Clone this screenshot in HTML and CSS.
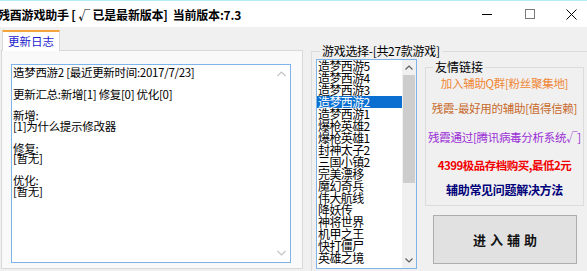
FILE: index.html
```html
<!DOCTYPE html>
<html lang="zh-CN">
<head>
<meta charset="utf-8">
<title>残酉游戏助手</title>
<link rel="stylesheet" href="styles.css">
</head>
<body>
<div class="window">
  <div class="titlebar">
    <div class="title">残酉游戏助手 [ √ 已是最新版本]  当前版本:7.3</div>
    <div class="controls">
      <div class="ctl"><svg width="10" height="10" viewBox="0 0 10 10"><path d="M0 5.5H10" stroke="#000" stroke-width="1"/></svg></div>
      <div class="ctl"><svg width="10" height="10" viewBox="0 0 10 10"><rect x="0.5" y="0.5" width="9" height="9" fill="none" stroke="#7a7a7a" stroke-width="1"/></svg></div>
      <div class="ctl close"><svg width="11" height="11" viewBox="0 0 11 11"><path d="M0.5 0.5L10.5 10.5M10.5 0.5L0.5 10.5" stroke="#000" stroke-width="1"/></svg></div>
    </div>
  </div>
  <div class="main">
    <div class="left">
      <div class="tabstrip"><div class="tab">更新日志</div></div>
      <div class="panel">
        <div class="textbox">
          <div class="text">造梦西游2 [最近更新时间:2017/7/23]

更新汇总:新增[1] 修复[0] 优化[0]

新增:
[1]为什么提示修改器

修复:
[暂无]

优化:
[暂无]</div>
          <div class="vscroll">
            <svg width="9" height="6" viewBox="0 0 9 6"><path d="M0.5 5L4.5 1L8.5 5" fill="none" stroke="#c4c4c4" stroke-width="1.2"/></svg>
            <svg width="9" height="6" viewBox="0 0 9 6"><path d="M0.5 1L4.5 5L8.5 1" fill="none" stroke="#c4c4c4" stroke-width="1.2"/></svg>
          </div>
        </div>
      </div>
    </div>
    <div class="right">
      <fieldset class="games">
        <legend>游戏选择-[共27款游戏]</legend>
        <div class="games-body">
          <div class="listbox">
            <div class="items">
              <div class="item">造梦西游5</div>
              <div class="item">造梦西游4</div>
              <div class="item">造梦西游3</div>
              <div class="item selected">造梦西游2</div>
              <div class="item">造梦西游1</div>
              <div class="item">爆枪英雄2</div>
              <div class="item">爆枪英雄1</div>
              <div class="item">封神太子2</div>
              <div class="item">三国小镇2</div>
              <div class="item">完美漂移</div>
              <div class="item">魔幻奇兵</div>
              <div class="item">伟大航线</div>
              <div class="item">降妖传</div>
              <div class="item">神将世界</div>
              <div class="item">机甲之王</div>
              <div class="item">快打僵尸</div>
              <div class="item">英雄之境</div>
            </div>
            <div class="lscroll">
              <div class="arrow"><svg width="8" height="5" viewBox="0 0 8 5"><path d="M0.5 4.5L4 1L7.5 4.5" fill="none" stroke="#606060" stroke-width="1.2"/></svg></div>
              <div class="track"><div class="thumb"></div></div>
              <div class="arrow"><svg width="8" height="5" viewBox="0 0 8 5"><path d="M0.5 0.5L4 4L7.5 0.5" fill="none" stroke="#606060" stroke-width="1.2"/></svg></div>
            </div>
          </div>
          <div class="side">
            <fieldset class="links">
              <legend>友情链接</legend>
              <div class="link l1">加入辅助Q群[粉丝聚集地]</div>
              <div class="link l2">残霞-最好用的辅助[值得信赖]</div>
              <div class="link l3">残霞通过[腾讯病毒分析系统√]</div>
              <div class="link l4">4399极品存档购买,最低2元</div>
              <div class="link l5">辅助常见问题解决方法</div>
            </fieldset>
            <button class="enter">进入辅助</button>
          </div>
        </div>
      </fieldset>
    </div>
  </div>
</div>
</body>
</html>
```
FILE: styles.css
```css
html, body {
  margin: 0;
  padding: 0;
}
body {
  width: 587px;
  height: 271px;
  overflow: hidden;
  background: #f0f0f0;
  font-family: "Noto Sans CJK SC", "Microsoft YaHei", sans-serif;
  color: #000;
}
.window {
  width: 587px;
  height: 271px;
  overflow: hidden;
}
.titlebar {
  height: 26px;
  border-top: 1px solid #b3ecf8;
  background: #fff;
  display: flex;
  align-items: center;
}
.title {
  font-size: 12px;
  font-weight: bold;
  white-space: pre;
  margin-left: -2px;
  letter-spacing: -0.2px;
}
.controls {
  margin-left: auto;
  margin-right: -5px;
  display: flex;
  height: 26px;
}
.ctl {
  width: 43px;
  display: flex;
  align-items: center;
  justify-content: center;
}
.ctl.close {
  width: 41px;
}
.main {
  display: flex;
  height: 244px;
}
.left {
  width: 304px;
  flex: none;
}
.tabstrip {
  height: 23px;
  padding-left: 2px;
  display: flex;
  align-items: flex-end;
}
.tab {
  width: 56px;
  height: 19px;
  border-top: 2px solid #f3a53c;
  border-left: 1px solid #d9d9d9;
  border-right: 1px solid #d9d9d9;
  background: #fff;
  color: #1c1ccf;
  font-size: 11.5px;
  line-height: 19px;
  text-align: center;
  margin-bottom: -1px;
  position: relative;
  z-index: 1;
}
.panel {
  margin-left: 1px;
  width: 302px;
  height: 219px;
  box-sizing: border-box;
  border: 1px solid #d9d9d9;
  background: #f9f9f9;
  padding: 13px 0 0 9px;
}
.textbox {
  width: 280px;
  height: 199px;
  box-sizing: border-box;
  border: 1px solid #7eb4ea;
  background: #fff;
  display: flex;
}
.text {
  flex: 1;
  padding: 2px 0 0 1px;
  font-size: 11.5px;
  line-height: 10.8px;
  white-space: pre;
  letter-spacing: -0.3px;
}
.vscroll {
  width: 17px;
  display: flex;
  flex-direction: column;
  justify-content: space-between;
  align-items: center;
  padding: 6px 0 6px;
}
.right {
  flex: 1;
  padding-left: 7px;
}
.games {
  margin: 17px 0 0 0;
  padding: 0 0 0 4px;
  border: 1px solid #dcdcdc;
  border-right: none;
  border-bottom: none;
  height: 260px;
  box-sizing: border-box;
  min-width: 0;
}
.games > legend {
  margin-left: 4px;
  padding: 0 2px;
  font-size: 12px;
  line-height: 14px;
  letter-spacing: -0.3px;
}
.games-body {
  display: flex;
  align-items: flex-start;
}
.listbox {
  margin-top: 1px;
  width: 101px;
  height: 210px;
  box-sizing: border-box;
  border: 1px solid #7eb4ea;
  background: #fff;
  display: flex;
}
.items {
  flex: 1;
  padding-top: 0;
}
.item {
  height: 12px;
  line-height: 12px;
  font-size: 12px;
  padding-left: 1px;
  white-space: nowrap;
  letter-spacing: -0.6px;
}
.item.selected {
  background: #0a6fd1;
  color: #fff;
}
.lscroll {
  width: 14px;
  background: #f0f0f0;
  display: flex;
  flex-direction: column;
}
.arrow {
  height: 15px;
  display: flex;
  align-items: center;
  justify-content: center;
}
.track {
  flex: 1;
}
.thumb {
  height: 108px;
  margin: 0 1px;
  background: #cdcdcd;
}
.side {
  margin-left: 8px;
  margin-top: 2px;
  display: flex;
  flex-direction: column;
}
.links {
  margin: 0;
  width: 159px;
  height: 146px;
  box-sizing: border-box;
  border: 1px solid #dcdcdc;
  padding: 0;
  min-width: 0;
}
.links > legend {
  margin-left: 7px;
  padding: 0 2px;
  font-size: 12px;
  line-height: 14px;
}
.link {
  text-align: center;
  line-height: 14px;
  white-space: nowrap;
  font-size: 11.5px;
  letter-spacing: -0.3px;
}
.l1 { margin-top: 2px; color: #f08634; }
.l2 { margin-top: 11px; color: #c8692a; }
.l3 { margin-top: 15px; color: #9a2fd6; }
.l4 { margin-top: 14px; color: #f20000; font-weight: bold; font-size: 11.5px; letter-spacing: -0.5px; }
.l5 { margin-top: 11px; color: #00007a; font-weight: bold; font-size: 12px; }
.enter {
  margin: 9px 0 0 8px;
  width: 144px;
  height: 49px;
  background: #e1e1e1;
  border: 1px solid #adadad;
  font-family: "Noto Sans CJK SC", sans-serif;
  font-size: 13px;
  font-weight: bold;
  letter-spacing: 4px;
  padding: 0 0 0 4px;
  color: #111;
}
```
